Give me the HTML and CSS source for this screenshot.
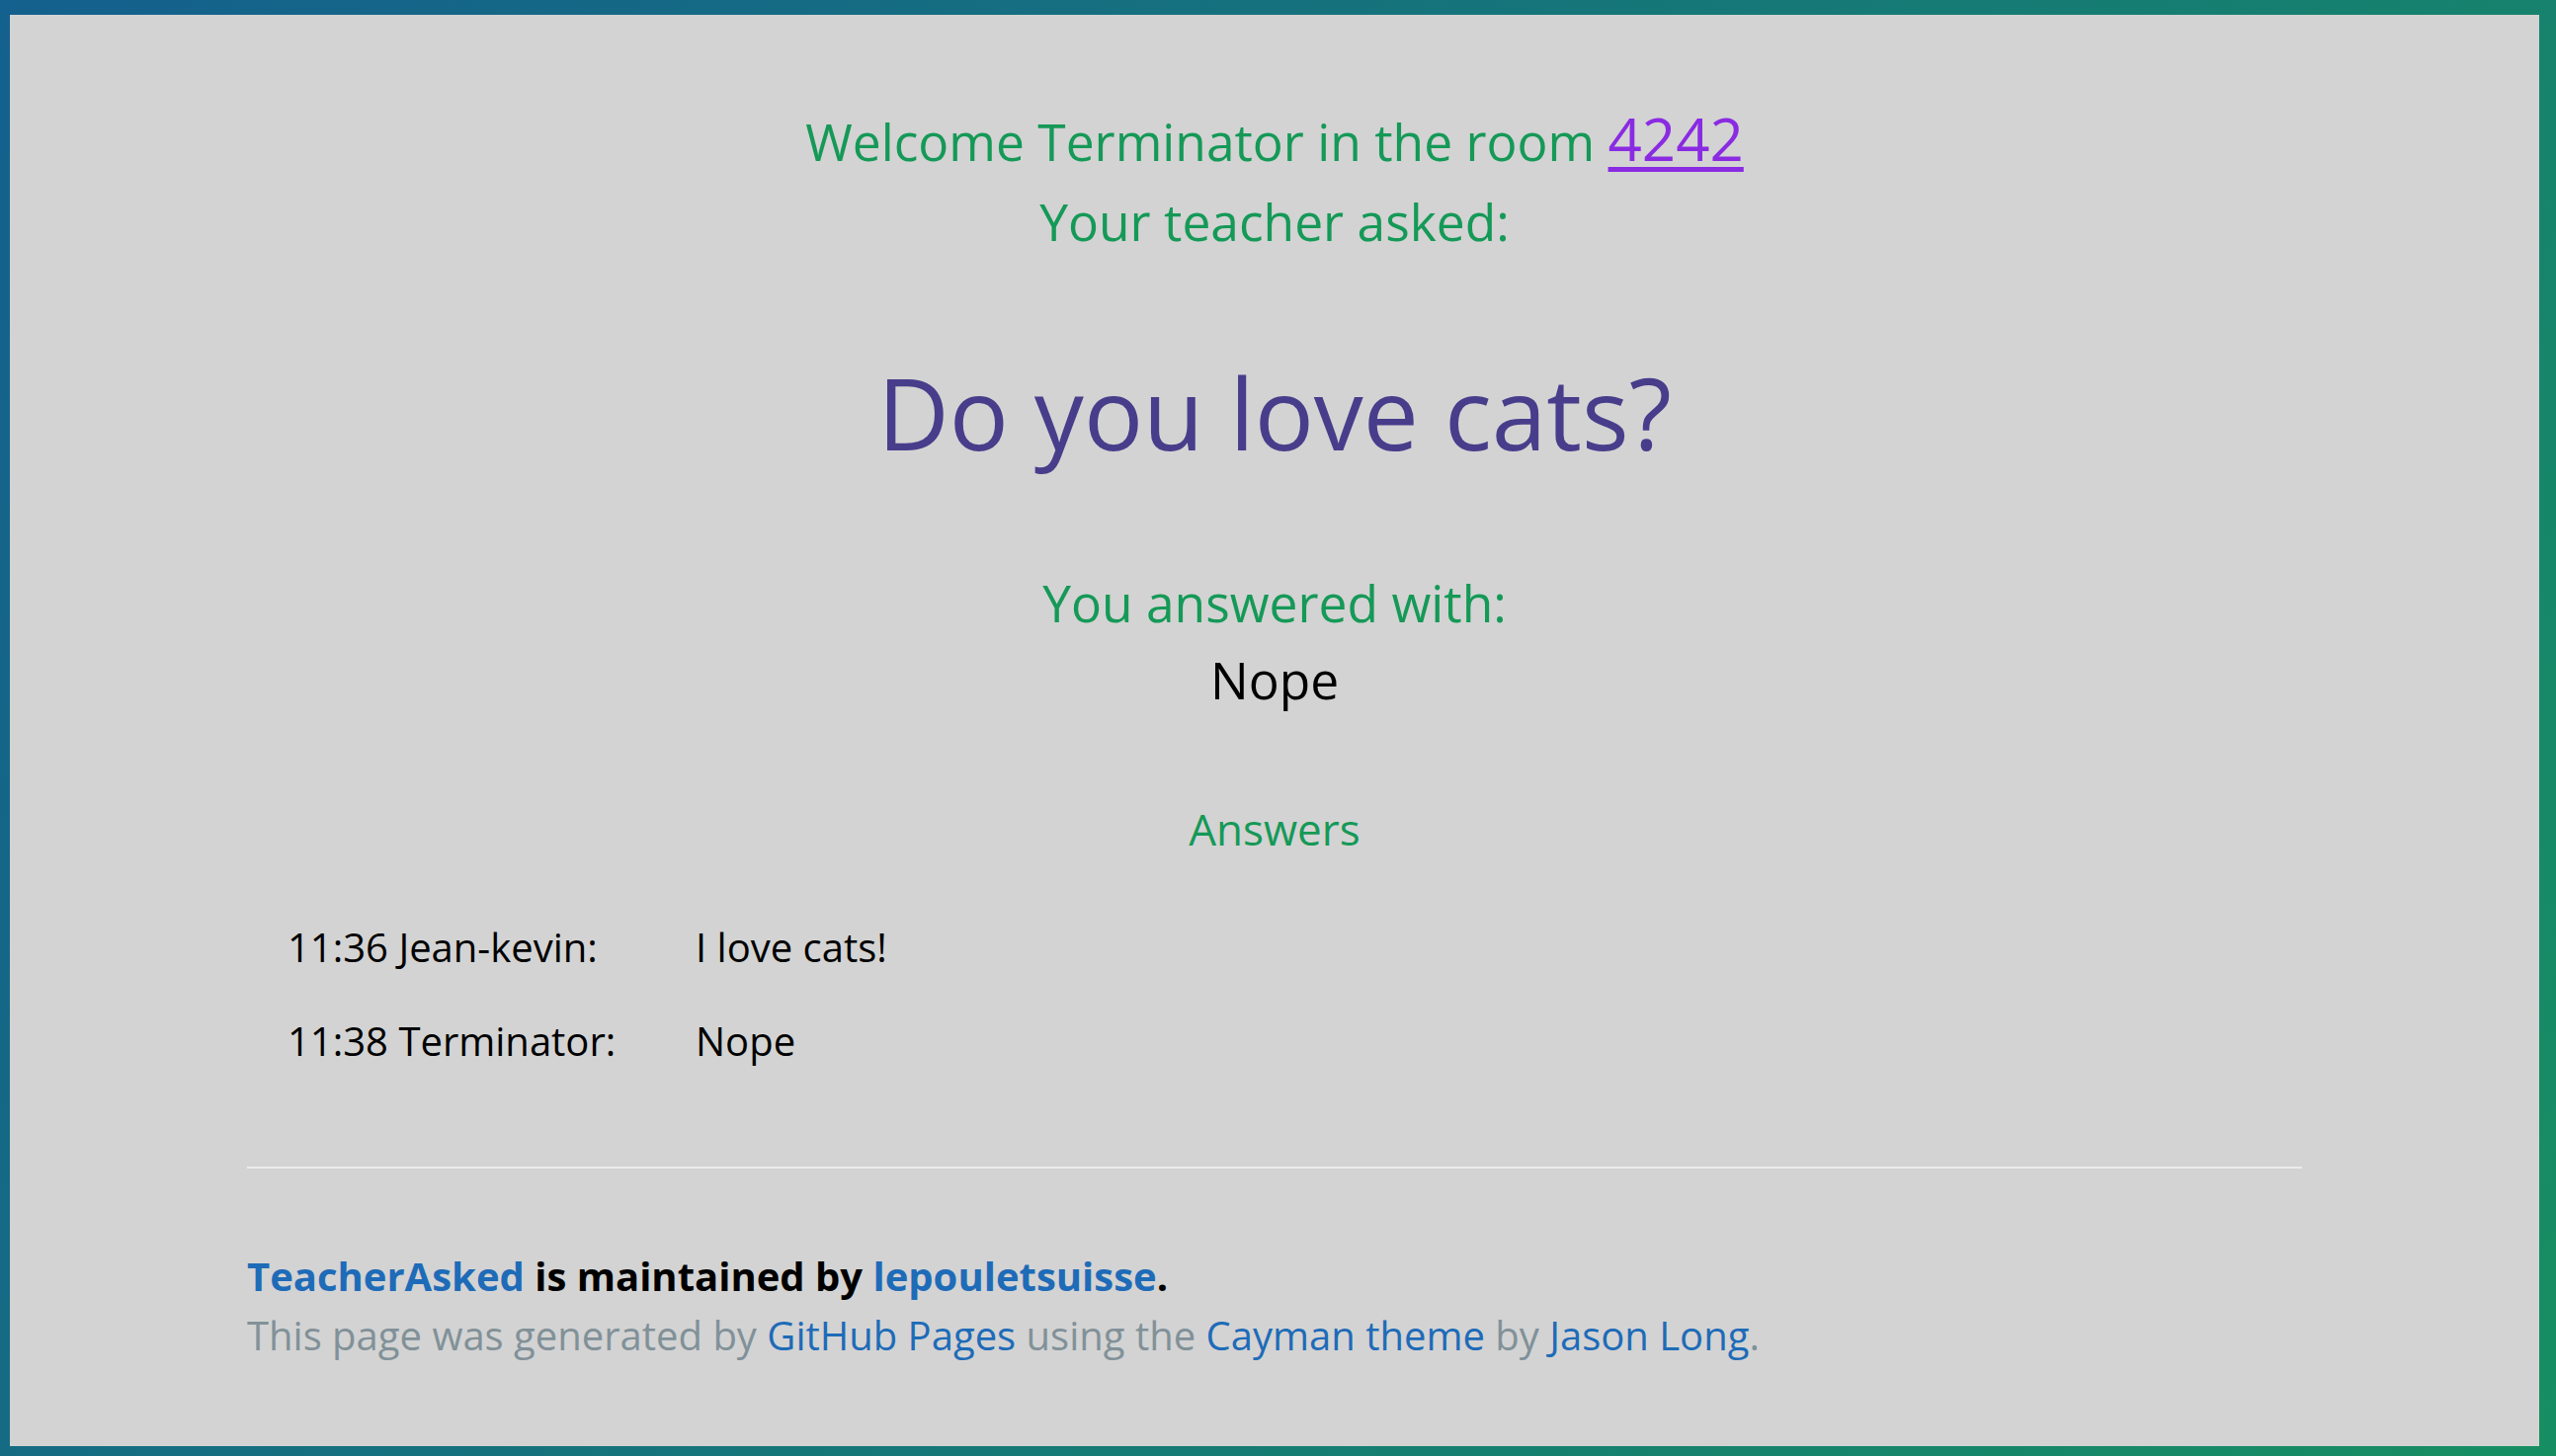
FILE: index.html
```html
<!DOCTYPE html>
<html lang="en">
<head>
<meta charset="utf-8">
<title>TeacherAsked</title>
<link rel="stylesheet" href="styles.css">
</head>
<body>
<main class="main-content">
  <h3 class="greet">Welcome Terminator in the room <a class="room" href="#">4242</a><br>Your teacher asked:</h3>
  <h1 class="question">Do you love cats?</h1>
  <h3 class="answered">You answered with:<br><span class="my-answer">Nope</span></h3>
  <h4 class="answers-title">Answers</h4>
  <div class="answers">
    <div class="who">11:36 Jean-kevin:</div><div class="what">I love cats!</div>
    <div class="who">11:38 Terminator:</div><div class="what">Nope</div>
  </div>
  <footer class="site-footer">
    <span class="owner"><a href="#">TeacherAsked</a> is maintained by <a href="#">lepouletsuisse</a>.</span>
    <span class="credits">This page was generated by <a href="#">GitHub Pages</a> using the <a href="#">Cayman theme</a> by <a href="#">Jason Long</a>.</span>
  </footer>
</main>
</body>
</html>
```
FILE: styles.css
```css
html, body {
  margin: 0;
  height: 100%;
}
body {
  box-sizing: border-box;
  padding: 15px 17px 10px 10px;
  background: linear-gradient(120deg, #14608e, #178e62);
  font-family: "Open Sans", "Liberation Sans", sans-serif;
  line-height: 1.5;
  color: #000;
  display: flex;
  flex-direction: column;
  overflow: hidden;
}
.main-content {
  flex: 1;
  background: #d3d3d3;
  padding: 80px 240px 0;
  box-sizing: border-box;
}
.greet, .answered {
  margin: 0;
  font-size: 51.5px;
  line-height: 78px;
  font-weight: normal;
  color: #159957;
  text-align: center;
}
.room {
  font-size: 60px;
  line-height: 1.5;
  color: #8a2be2;
  text-decoration-thickness: 5px;
  text-underline-offset: 6px;
}
.question {
  margin: 79px 0 0;
  font-size: 100px;
  font-weight: normal;
  color: #483d8b;
  text-align: center;
}
.answered {
  margin-top: 79px;
}
.my-answer {
  color: #000;
}
.answers-title {
  margin: 79px 0 0;
  font-size: 44px;
  font-weight: normal;
  color: #159957;
  text-align: center;
}
.answers {
  margin-top: 57px;
  padding-left: 41px;
  display: grid;
  grid-template-columns: 413px auto;
  row-gap: 35px;
  font-size: 40px;
  line-height: 60px;
}
.site-footer {
  margin-top: 97px;
  border-top: 2px solid #ececec;
  padding-top: 79px;
  font-size: 40px;
  line-height: 60px;
}
.site-footer a {
  color: #1e6bb8;
  text-decoration: none;
}
.owner {
  display: block;
  font-weight: bold;
}
.credits {
  display: block;
  color: #819198;
}
```
